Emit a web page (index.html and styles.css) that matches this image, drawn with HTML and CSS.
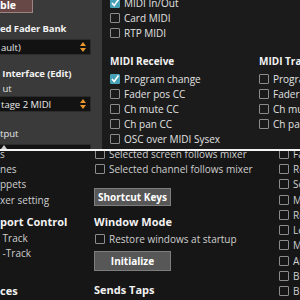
FILE: index.html
```html
<!DOCTYPE html>
<html lang="en">
<head>
    <meta charset="UTF-8">
    <title>MIDI Setup</title>
    <link rel="stylesheet" href="styles.css">
</head>
<body>
    <div class="top">
        <div class="side">
            <div class="btn-enable">ble</div>
            <div class="title">ed Fader Bank</div>
            <div class="select">ault)<svg class="arrows" width="6" height="10" viewBox="0 0 6 10"><path d="M3 0 L6 4 L0 4 Z M0 6 L6 6 L3 10 Z" fill="#e8962e"/></svg></div>
            <div class="title gap1">&nbsp;Interface (Edit)</div>
            <div class="label">&nbsp;ut</div>
            <div class="select">tage 2 MIDI<svg class="arrows" width="6" height="10" viewBox="0 0 6 10"><path d="M3 0 L6 4 L0 4 Z M0 6 L6 6 L3 10 Z" fill="#e8962e"/></svg></div>
            <div class="label gap2">tput</div>
            <div class="select short"><svg class="arrows" width="6" height="10" viewBox="0 0 6 10"><path d="M3 0 L6 4 L0 4 Z M0 6 L6 6 L3 10 Z" fill="#cfcfcf"/></svg></div>
        </div>

        <div class="col mid">
            <div class="row first"><span class="box on"><svg width="10" height="10" viewBox="0 0 10 10"><path d="M2 5 L4.2 7.5 L8.5 1.5" stroke="#fff" stroke-width="1.6" fill="none"/></svg></span>MIDI In/Out</div>
            <div class="row"><span class="box"></span>Card MIDI</div>
            <div class="row"><span class="box"></span>RTP MIDI</div>
            <div class="title group">MIDI Receive</div>
            <div class="row"><span class="box on"><svg width="10" height="10" viewBox="0 0 10 10"><path d="M2 5 L4.2 7.5 L8.5 1.5" stroke="#fff" stroke-width="1.6" fill="none"/></svg></span>Program change</div>
            <div class="row"><span class="box"></span>Fader pos CC</div>
            <div class="row"><span class="box"></span>Ch mute CC</div>
            <div class="row"><span class="box"></span>Ch pan CC</div>
            <div class="row"><span class="box"></span>OSC over MIDI Sysex</div>
        </div>

        <div class="col right">
            <div class="title lone">MIDI Transmit</div>
            <div class="row"><span class="box"></span>Program change</div>
            <div class="row"><span class="box"></span>Fader pos CC</div>
            <div class="row"><span class="box"></span>Ch mute CC</div>
            <div class="row"><span class="box"></span>Ch pan CC</div>
        </div>
    </div>

    <div class="divider"></div>

    <div class="bottom">
        <div class="col b-left">
            <div class="row tall first">s</div>
            <div class="row tall">nes</div>
            <div class="row tall">ppets</div>
            <div class="row tall">xer setting</div>
            <div class="title sect">port Control</div>
            <div class="row tall">&nbsp;Track</div>
            <div class="row tall">&nbsp;-Track</div>
            <div class="title far">ces</div>
        </div>

        <div class="col b-mid">
            <div class="row first"><span class="box"></span>Selected screen follows mixer</div>
            <div class="row"><span class="box"></span>Selected channel follows mixer</div>
            <div class="btn keys">Shortcut Keys</div>
            <div class="title wm">Window Mode</div>
            <div class="row"><span class="box"></span>Restore windows at startup</div>
            <div class="btn init">Initialize</div>
            <div class="title taps">Sends Taps</div>
        </div>

        <div class="col b-right">
            <div class="row tall first"><span class="box"></span>Fader</div>
            <div class="row tall"><span class="box"></span>Rec</div>
            <div class="row tall"><span class="box"></span>Solo</div>
            <div class="row tall"><span class="box"></span>Mute</div>
            <div class="row tall"><span class="box"></span>Rec</div>
            <div class="row tall"><span class="box"></span>Level</div>
            <div class="row tall"><span class="box"></span>Mute</div>
            <div class="row tall"><span class="box"></span>Aux</div>
            <div class="row tall"><span class="box"></span>Bus</div>
            <div class="row tall"><span class="box"></span>Bus</div>
        </div>
    </div>
</body>
</html>
```

FILE: styles.css
```css
body {
    margin: 0;
    width: 300px;
    height: 300px;
    overflow: hidden;
    background: #161616;
    font-family: "Open Sans", sans-serif;
    font-size: 10px;
    color: #e2e2e2;
}

.top {
    display: flex;
    height: 149px;
    overflow: hidden;
    background: #1b1b1b;
}

.divider {
    height: 2px;
    background: #f4f4f4;
}

.bottom {
    display: flex;
    height: 149px;
    overflow: hidden;
    color: #cfcfcf;
}

.side {
    flex: none;
    width: 102px;
    background: #3a3a3a;
    overflow: hidden;
}

.btn-enable {
    width: 35px;
    height: 17px;
    margin-top: -4px;
    margin-left: -2px;
    padding-left: 1px;
    box-sizing: border-box;
    border: 1px solid #9c8484;
    background: #684747;
    color: #fff;
    font-weight: bold;
    font-size: 10.5px;
    line-height: 17px;
}

.title {
    font-weight: bold;
    font-size: 11px;
    line-height: 16px;
    color: #f2f2f2;
    white-space: nowrap;
}

.top .title {
    font-size: 10px;
}

.side .title {
    margin-top: 8px;
    margin-bottom: 2px;
    font-size: 9.5px;
    letter-spacing: -0.1px;
}

.side .title.gap1 {
    margin-top: 11px;
    margin-bottom: 0;
}

.label {
    line-height: 14px;
    font-size: 9.5px;
    color: #e6e6e6;
}

.label.gap2 {
    margin-top: 15px;
    margin-bottom: 3px;
}

.select {
    display: flex;
    align-items: center;
    justify-content: space-between;
    width: 95px;
    height: 16px;
    margin-left: -4px;
    padding: 0 4px;
    box-sizing: border-box;
    border: 1px solid #2c2c2c;
    background: #121212;
    font-size: 9.5px;
    color: #eaeaea;
}

.select.short {
    align-items: flex-start;
}

.arrows {
    flex: none;
}

.col {
    flex: none;
    overflow: hidden;
}

.mid {
    width: 149px;
    margin-left: 8px;
}

.right {
    width: 41px;
}

.row {
    display: flex;
    align-items: center;
    gap: 4px;
    height: 15px;
    white-space: nowrap;
}

.row.first {
    margin-top: -5px;
}

.row.tall {
    height: 15.3px;
}

.box {
    flex: none;
    width: 10px;
    height: 10px;
    box-sizing: border-box;
    border: 1px solid #8c8c8c;
    border-radius: 1px;
}

.box.on {
    border-color: #4aa6ba;
    background: #45a0b6;
}

.box svg {
    display: block;
    margin: -1px;
}

.mid .title.group {
    margin-top: 13px;
    margin-bottom: 2px;
}

.right .title.lone {
    margin-top: 53px;
    margin-bottom: 2px;
}

.b-left {
    width: 94px;
}

.b-mid {
    width: 185px;
}

.b-mid .row {
    padding-left: 1px;
}

.b-right {
    width: 21px;
}

.btn {
    width: 77px;
    box-sizing: border-box;
    border: 1px solid #7e7e7e;
    background: #575757;
    color: #fff;
    font-weight: bold;
    font-size: 10px;
    text-align: center;
    white-space: nowrap;
}

.btn.keys {
    height: 18px;
    line-height: 16px;
    margin-top: 12px;
}

.btn.init {
    height: 20px;
    line-height: 18px;
    margin-top: 5px;
}

.b-mid .title.wm {
    margin-top: 8px;
    margin-bottom: 1px;
}

.b-mid .title.taps {
    margin-top: 11px;
}

.b-left .title.sect {
    margin-top: 7px;
}

.b-left .title.far {
    margin-top: 22px;
}
```
